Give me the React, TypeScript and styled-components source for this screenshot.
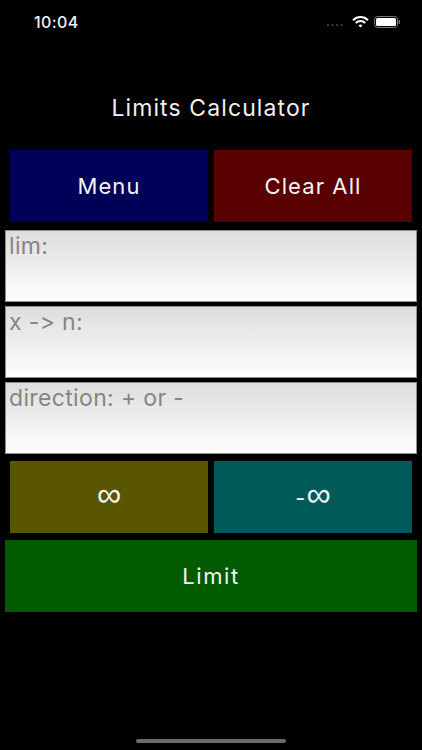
import styled, { createGlobalStyle } from 'styled-components';

const GlobalStyle = createGlobalStyle`
  html, body {
    margin: 0;
    padding: 0;
    background: #000000;
  }
  * {
    box-sizing: border-box;
  }
`;

const Screen = styled.div`
  width: 422px;
  height: 750px;
  background: #000000;
  color: #ffffff;
  font-family: Inter, 'Liberation Sans', sans-serif;
  font-feature-settings: 'calt' 0, 'liga' 0;
  display: flex;
  flex-direction: column;
  overflow: hidden;
`;

const StatusBar = styled.div`
  height: 44px;
  padding: 0 21px 0 34px;
  display: flex;
  align-items: center;
  justify-content: space-between;
`;

const Clock = styled.span`
  font-size: 16px;
  letter-spacing: 0.4px;
  font-weight: 500;
  color: #f2f2f2;
`;

const StatusIcons = styled.div`
  display: flex;
  align-items: center;
  gap: 5px;
`;

const Title = styled.h1`
  margin: 0;
  height: 106px;
  padding-top: 47px;
  text-align: center;
  font-size: 23px;
  letter-spacing: 1.1px;
  line-height: 34px;
  font-weight: 400;
  color: #f0f0f0;
`;

const Form = styled.div`
  padding: 0 5px;
  display: flex;
  flex-direction: column;
`;

const ButtonRow = styled.div<{ $top: number; $bottom: number }>`
  padding: 0 5px;
  margin: ${({ $top }) => $top}px 0 ${({ $bottom }) => $bottom}px;
  display: grid;
  grid-template-columns: 1fr 1fr;
  gap: 6px;
`;

const ActionButton = styled.button<{ $bg: string }>`
  height: 72px;
  border: 0;
  padding: 0;
  background: ${({ $bg }) => $bg};
  color: #f4f4f4;
  font-family: inherit;
  font-size: 22px;
  letter-spacing: 1.1px;
  font-weight: 400;
`;

const InfinityGlyph = styled.span`
  font-family: 'Liberation Sans', sans-serif;
  font-size: 34px;
  line-height: 20px;
  letter-spacing: 0;
`;

const Field = styled.div`
  height: 72px;
  margin-bottom: 4px;
  padding: 2px 3px;
  border: 1px solid #8f8f8f;
  background: linear-gradient(#dddddd, #fefefe);
  color: #858585;
  font-size: 23px;
  letter-spacing: 0.35px;
  line-height: 27px;
`;

const LimitButton = styled(ActionButton)`
  width: 100%;
  font-size: 22px;
  letter-spacing: 1.6px;
`;

const HomeBar = styled.div`
  width: 150px;
  height: 4px;
  border-radius: 2px;
  background: #6a6a6a;
  margin: auto auto 7px;
`;

const App = () => (
  <>
    <GlobalStyle />
    <Screen>
      <StatusBar>
        <Clock>10:04</Clock>
        <StatusIcons>
          <svg width="20" height="12" viewBox="0 0 20 12">
            {[1, 5.5, 10, 14.5].map((x) => (
              <circle key={x} cx={x} cy="9" r="1" fill="#4a4a4a" />
            ))}
          </svg>
          <svg width="17" height="12" viewBox="0 0 17 12" fill="none" stroke="#ffffff" strokeWidth="2">
            <path d="M1 4.2a10.5 10.5 0 0 1 15 0" />
            <path d="M3.8 7a6.5 6.5 0 0 1 9.4 0" />
            <path d="M8.5 11.5 6.5 9.4a3 3 0 0 1 4 0z" fill="#ffffff" stroke="none" />
          </svg>
          <svg width="27" height="12" viewBox="0 0 27 12">
            <rect x="0.5" y="0.5" width="23" height="11" rx="3" fill="none" stroke="#777777" />
            <rect x="2" y="2" width="20" height="8" rx="1.5" fill="#ffffff" />
            <rect x="24.5" y="4" width="1.5" height="4" rx="0.7" fill="#777777" />
          </svg>
        </StatusIcons>
      </StatusBar>
      <Title>Limits Calculator</Title>
      <Form>
        <ButtonRow $top={0} $bottom={8}>
          <ActionButton $bg="#000058">Menu</ActionButton>
          <ActionButton $bg="#590000">Clear All</ActionButton>
        </ButtonRow>
        <Field>lim:</Field>
        <Field>x -&gt; n:</Field>
        <Field>direction: + or -</Field>
        <ButtonRow $top={3} $bottom={7}>
          <ActionButton $bg="#5a5600">
            <InfinityGlyph>∞</InfinityGlyph>
          </ActionButton>
          <ActionButton $bg="#005a5a">
            -<InfinityGlyph>∞</InfinityGlyph>
          </ActionButton>
        </ButtonRow>
        <LimitButton $bg="#005a00">Limit</LimitButton>
      </Form>
      <HomeBar />
    </Screen>
  </>
);

export default App;
